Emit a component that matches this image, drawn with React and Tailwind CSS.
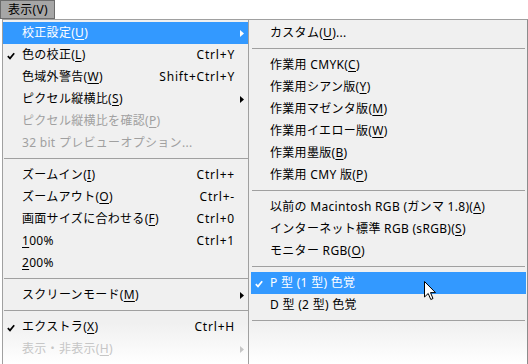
import React from 'react';

// Photoshop-style "表示" menu with the 校正設定 submenu open

const Check = ({ white }) => (
    <svg width="8" height="8" viewBox="0 0 8 8" className="absolute left-[4px] top-[8px]">
        <path d="M0.8 4.2 L3 6.4 L7.2 1.2" fill="none" stroke={white ? '#ffffff' : '#000000'} strokeWidth="1.7" />
    </svg>
);

const Arrow = ({ color }) => (
    <svg width="4" height="7" viewBox="0 0 4 7" className="absolute right-[4px] top-[8px]">
        <polygon points="0,0 4,3.5 0,7" fill={color} />
    </svg>
);

const K = ({ children }) => <u className="underline underline-offset-2 decoration-1">{children}</u>;

const leftItems = [
    { label: <>校正設定(<K>U</K>)</>, sub: true, active: true },
    { label: <>色の校正(<K>L</K>)</>, shortcut: 'Ctrl+Y', check: true },
    { label: <>色域外警告(<K>W</K>)</>, shortcut: 'Shift+Ctrl+Y' },
    { label: <>ピクセル縦横比(<K>S</K>)</>, sub: true },
    { label: <>ピクセル縦横比を確認(<K>P</K>)</>, disabled: true },
    { label: '32 bit プレビューオプション...', disabled: true },
    { sep: true },
    { label: <>ズームイン(<K>I</K>)</>, shortcut: 'Ctrl++' },
    { label: <>ズームアウト(<K>O</K>)</>, shortcut: 'Ctrl+-' },
    { label: <>画面サイズに合わせる(<K>F</K>)</>, shortcut: 'Ctrl+0' },
    { label: <><K>1</K>00%</>, shortcut: 'Ctrl+1' },
    { label: <><K>2</K>00%</> },
    { sep: true },
    { label: <>スクリーンモード(<K>M</K>)</>, sub: true },
    { sep: true },
    { label: <>エクストラ(<K>X</K>)</>, shortcut: 'Ctrl+H', check: true },
    { label: <>表示・非表示(<K>H</K>)</>, sub: true, faded: true },
];

const subItems = [
    { label: <>カスタム(<K>U</K>)...</> },
    { sep: true },
    { label: <>作業用 CMYK(<K>C</K>)</> },
    { label: <>作業用シアン版(<K>Y</K>)</> },
    { label: <>作業用マゼンタ版(<K>M</K>)</> },
    { label: <>作業用イエロー版(<K>W</K>)</> },
    { label: <>作業用墨版(<K>B</K>)</> },
    { label: <>作業用 CMY 版(<K>P</K>)</> },
    { sep: true },
    { label: <>以前の Macintosh RGB (ガンマ 1.8)(<K>A</K>)</> },
    { label: <>インターネット標準 RGB (sRGB)(<K>S</K>)</> },
    { label: <>モニター RGB(<K>O</K>)</> },
    { sep: true },
    { label: 'P 型 (1 型) 色覚', check: true, active: true },
    { label: 'D 型 (2 型) 色覚' },
    { sep: true },
];

function Row({ item }) {
    let text = 'text-black';
    if (item.active) text = 'text-white';
    else if (item.faded) text = 'text-[#c6c6c6]';
    else if (item.disabled) text = 'text-[#a0a0a0]';

    return (
        <div className={`relative flex items-center h-[22px] pl-[19px] pr-[13px] leading-[22px] whitespace-nowrap ${item.active ? 'bg-[#3399ff]' : ''} ${text}`}>
            {item.check && <Check white={item.active} />}
            <span>{item.label}</span>
            {item.shortcut && <span className="ml-auto tracking-[0.8px]">{item.shortcut}</span>}
            {item.sub && <Arrow color={item.active ? '#ffffff' : item.faded ? '#c6c6c6' : '#000000'} />}
        </div>
    );
}

const Sep = ({ className }) => (
    <div className={`h-[10px] pt-[4px] ${className}`}>
        <div className="h-px bg-[#a0a0a0]" />
    </div>
);

export default function App() {
    return (
        <div
            className="relative w-[528px] h-[364px] overflow-hidden bg-white text-[12px] text-black tracking-[0.3px]"
            style={{ fontFamily: '"Noto Sans", "Noto Sans CJK JP", sans-serif' }}
        >
            {/* menu bar */}
            <div className="h-[19px] flex">
                <div className="w-[55px] h-[19px] bg-[#a6a6a6] border border-[#6c6c6c] pl-[7px] leading-[17px]">表示(V)</div>
            </div>

            <div className="flex pl-[2px] h-[345px]">
                {/* main menu */}
                <div className="w-[246px] border-l border-t border-[#a0a0a0] pt-[2px] bg-[linear-gradient(to_bottom,#f0f0f0_88%,#ffffff_100%)]">
                    {leftItems.map((item, i) =>
                        item.sep ? <Sep key={i} className="ml-[1px]" /> : <Row key={i} item={item} />
                    )}
                </div>

                {/* submenu */}
                <div className="w-[280px] border-l border-t border-r border-[#a0a0a0] border-r-[#8c8c8c] pt-[2px] pl-[2px] pr-[1px] bg-[linear-gradient(to_bottom,#f0f0f0_88%,#ffffff_100%)]">
                    {subItems.map((item, i) =>
                        item.sep ? <Sep key={i} className="ml-[1px] mr-[1px]" /> : <Row key={i} item={item} />
                    )}
                </div>
            </div>

            {/* mouse cursor */}
            <svg width="13" height="20" viewBox="0 0 13 20" className="absolute left-[424px] top-[281px]">
                <path d="M0.5 0.5 L0.5 16 L4.2 12.5 L6.8 18.5 L9 17.5 L6.5 11.6 L11.5 11.6 Z" fill="#ffffff" stroke="#000000" strokeWidth="1" strokeLinejoin="miter" />
            </svg>
        </div>
    );
}
